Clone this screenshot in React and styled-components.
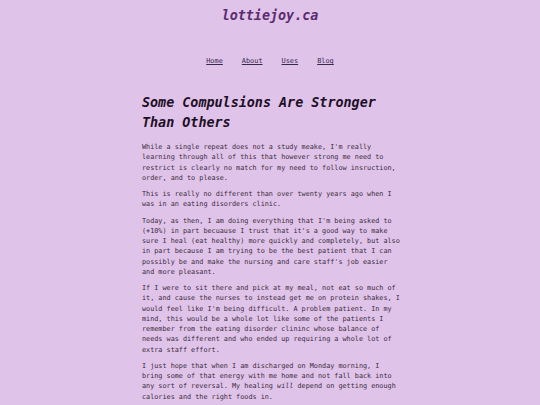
import React from "react";
import styled, { createGlobalStyle } from "styled-components";

const Global = createGlobalStyle`
  html, body { margin: 0; padding: 0; background: #e0c3e9; }
  body { font-family: "DejaVu Sans Mono", "Liberation Mono", monospace; }
`;

const Page = styled.div`
  display: flex;
  flex-direction: column;
  align-items: center;
  padding-top: 6px;
  color: #3a2c40;
`;

const SiteTitle = styled.div`
  font-size: 13.4px;
  line-height: 20px;
  font-weight: bold;
  font-style: italic;
  color: #5b2b70;
`;

const Nav = styled.nav`
  display: flex;
  gap: 19px;
  margin-top: 30px;
  font-size: 6.9px;
  line-height: 10px;
`;

const NavLink = styled.a`
  color: #35284f;
  text-decoration: underline;
`;

const Article = styled.article`
  width: 260px;
  margin-top: 27px;
  margin-left: 4px;
`;

const Heading = styled.h1`
  margin: 0 0 9px;
  font-size: 13.4px;
  line-height: 20px;
  font-weight: bold;
  font-style: italic;
  color: #1c0f26;
`;

const Para = styled.p`
  margin: 0 0 6px;
  font-size: 6.8px;
  line-height: 10.25px;
  color: #3a2c40;
`;

export default function App() {
  return (
    <>
      <Global />
      <Page>
        <SiteTitle>lottiejoy.ca</SiteTitle>
        <Nav>
          <NavLink>Home</NavLink>
          <NavLink>About</NavLink>
          <NavLink>Uses</NavLink>
          <NavLink>Blog</NavLink>
        </Nav>
        <Article>
          <Heading>Some Compulsions Are Stronger Than Others</Heading>
          <Para>
            While a single repeat does not a study meake, I'm really learning through all of this that however strong me need to restrict is clearly no match for my need to follow insruction, order, and to please.
          </Para>
          <Para>
            This is really no different than over twenty years ago when I was in an eating disorders clinic.
          </Para>
          <Para>
            Today, as then, I am doing everything that I'm being asked to (+10%) in part becuause I trust that it's a good way to make sure I heal (eat healthy) more quickly and completely, but also in part because I am trying to be the best patient that I can possibly be and make the nursing and care staff's job easier and more pleasant.
          </Para>
          <Para>
            If I were to sit there and pick at my meal, not eat so much of it, and cause the nurses to instead get me on protein shakes, I would feel like I'm being difficult. A problem patient. In my mind, this would be a whole lot like some of the patients I remember from the eating disorder clininc whose balance of needs was different and who ended up requiring a whole lot of extra staff effort.
          </Para>
          <Para>
            I just hope that when I am discharged on Monday morning, I bring some of that energy with me home and not fall back into any sort of reversal. My healing <em>will</em> depend on getting enough calories and the right foods in.
          </Para>
        </Article>
      </Page>
    </>
  );
}
